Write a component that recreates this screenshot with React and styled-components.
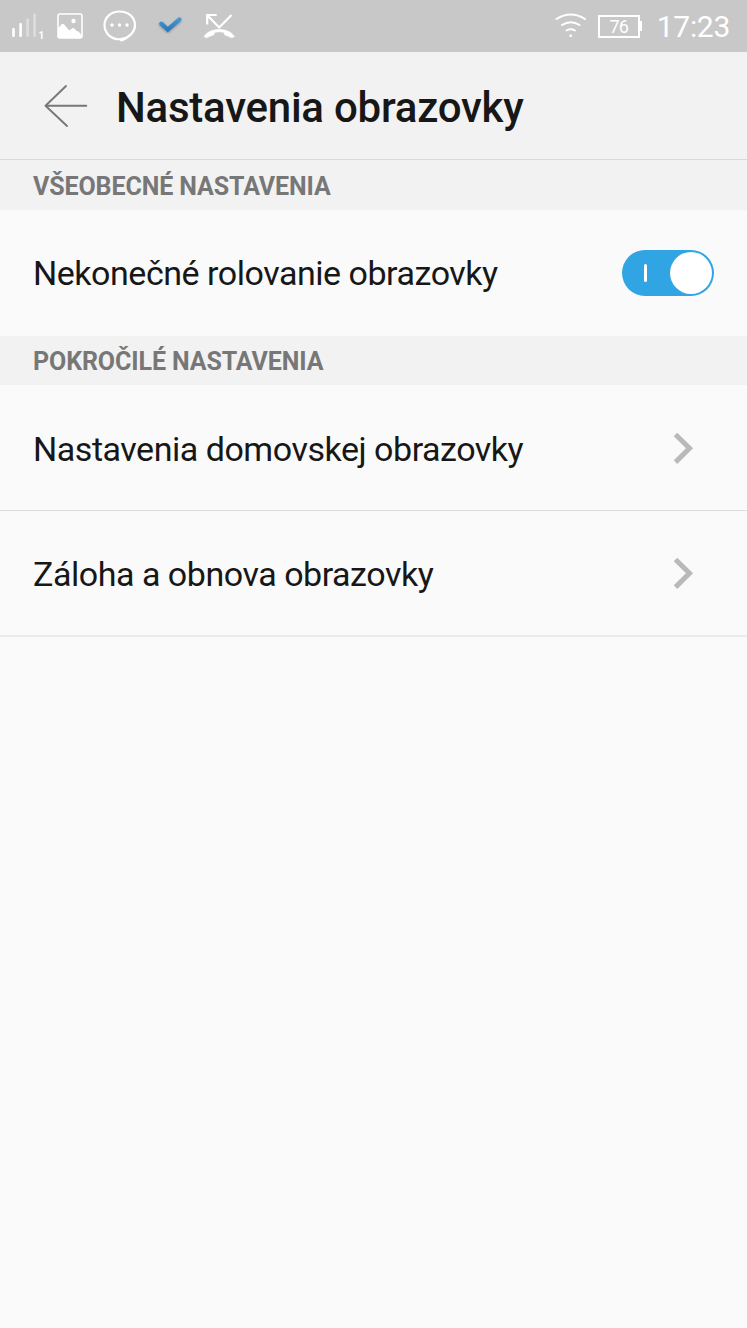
import React from "react";
import styled, { createGlobalStyle } from "styled-components";

const GlobalStyle = createGlobalStyle`
  *, *::before, *::after { box-sizing: border-box; }
  body {
    margin: 0;
    background: #fafafa;
    color: #171717;
    font-family: Roboto, "Noto Sans", sans-serif;
  }
  svg { display: block; flex: none; }
`;

const Screen = styled.main`
  display: flex;
  flex-direction: column;
  width: 100%;
  min-height: 1328px;
  background: #fafafa;
`;

const StatusBar = styled.div`
  display: flex;
  justify-content: space-between;
  height: 52px;
  padding: 0 17px 0 11px;
  background: #c8c8c8;
  color: #fff;
`;

const StatusGroup = styled.div`
  display: flex;
  align-items: center;
  gap: ${({ $gap }) => $gap}px;
`;

const NotificationIcons = styled(StatusGroup)`
  & > :first-child { margin-right: -8px; }
`;

const Clock = styled.time`
  margin-left: 4px;
  padding-top: 2px;
  font-size: 30px;
  line-height: 50px;
  letter-spacing: -0.3px;
`;

const Header = styled.header`
  display: flex;
  align-items: center;
  gap: 28px;
  height: 108px;
  padding-left: 43px;
  background: #f2f2f2;
  border-bottom: 1px solid #d9d9d9;
`;

const BackButton = styled.button`
  padding: 0;
  border: 0;
  background: none;
  color: #777;
`;

const Title = styled.h1`
  margin: 0;
  padding-top: 5px;
  font-size: 42px;
  font-weight: 500;
  line-height: 50px;
  letter-spacing: -0.24px;
  white-space: nowrap;
`;

const SectionTitle = styled.h2`
  height: ${({ $height }) => $height}px;
  margin: 0;
  padding: ${({ $top }) => $top}px 33px 0;
  background: #f2f2f2;
  color: #777;
  font-size: 25px;
  font-weight: 700;
  line-height: 50px;
  letter-spacing: -0.1px;
`;

const Row = styled.div`
  display: flex;
  align-items: center;
  justify-content: space-between;
  height: ${({ $height }) => $height}px;
  padding: 0 ${({ $right }) => $right}px ${({ $bottom = 0 }) => $bottom}px 33px;
  border-bottom: ${({ $line = "0" }) => $line};
`;

const Label = styled.span`
  padding-top: ${({ $top = 1 }) => $top}px;
  font-size: 34px;
  line-height: 42px;
  letter-spacing: -0.47px;
  white-space: nowrap;
`;

const Switch = styled.button`
  display: flex;
  align-items: center;
  justify-content: space-between;
  width: 92px;
  height: 46px;
  padding: 0 2px 0 22px;
  border: 0;
  border-radius: 23px;
  background: #31a5e3;
`;

const SwitchMark = styled.span`
  width: 3px;
  height: 18px;
  border-radius: 1.5px;
  background: #fff;
`;

const SwitchKnob = styled.span`
  width: 42px;
  height: 42px;
  border-radius: 50%;
  background: #fff;
`;

const BatteryWrap = styled.div`
  display: flex;
  align-items: center;
`;

const BatteryBody = styled.span`
  width: 42px;
  height: 23px;
  border: 2px solid #fff;
  font-size: 18px;
  line-height: 20px;
  letter-spacing: -0.8px;
  text-align: center;
`;

const BatteryTip = styled.span`
  width: 2px;
  height: 10px;
  background: #fff;
`;

const SignalIcon = () => (
  <svg width="34" height="52" viewBox="11 0 34 52" fill="#fff">
    <rect x="12.200" y="28" width="2.600" height="9" rx="1" />
    <rect x="19.300" y="23" width="2.600" height="14" rx="1" />
    <rect x="26.300" y="18.500" width="2.600" height="18.500" rx="1" opacity=".4" />
    <rect x="33.300" y="13.500" width="2.600" height="23.500" rx="1" opacity=".4" />
    <text x="38.500" y="39" fontSize="10" fontWeight="700">1</text>
  </svg>
);

const PictureIcon = () => (
  <svg width="26" height="52" viewBox="57 0 26 52">
    <rect x="58" y="14" width="24" height="24" rx="2" fill="none" stroke="#fff" strokeWidth="1.600" />
    <circle cx="73.500" cy="21" r="2.200" fill="#fff" />
    <path d="M58 28.500 61.500 24.300Q62.800 22.900 64.200 24.500L69.200 30.400 72 28.500Q73.200 27.700 74.300 28.500L76.700 31Q79.500 31 82 36.500V38H58Z" fill="#fff" />
  </svg>
);

const ChatIcon = () => (
  <svg width="34" height="52" viewBox="103 0 34 52" fill="#fff">
    <path d="M121 39.200C111.500 40 104.500 33.300 104.500 25.300 104.500 17.300 111 11.500 119.700 11.500S135 17.300 135 25.300C135 30.500 132 35.800 121.600 40.300Z" fill="none" stroke="#fff" strokeWidth="2.200" strokeLinejoin="round" />
    <path d="M120.500 38v3.500q6-1.300 9-5.500Z" />
    <circle cx="112" cy="25" r="1.700" />
    <circle cx="119.500" cy="25" r="1.700" />
    <circle cx="127" cy="25" r="1.700" />
  </svg>
);

const CheckIcon = () => (
  <svg width="26" height="52" viewBox="157 0 26 52">
    <defs>
      <linearGradient id="checkBlue" x1="0" y1="17" x2="0" y2="32" gradientUnits="userSpaceOnUse">
        <stop stopColor="#4a9cda" />
        <stop offset="1" stopColor="#2474b5" />
      </linearGradient>
      <filter id="checkShadow" x="-20%" y="-20%" width="140%" height="160%">
        <feDropShadow dx="0" dy="1.200" stdDeviation=".8" floodColor="#444" floodOpacity=".45" />
      </filter>
    </defs>
    <path d="m161.300 23.700 6.500 5.800 11.500-10" fill="none" stroke="url(#checkBlue)" strokeWidth="4.300" strokeLinecap="round" filter="url(#checkShadow)" />
  </svg>
);

const MissedCallIcon = () => (
  <svg width="32" height="52" viewBox="203 0 32 52">
    <path d="m231.500 15-12.300 12.500L207.500 15.500M207.200 24.500V15h9.500" fill="none" stroke="#fff" strokeWidth="2.200" />
    <path d="M204 36.500C207 32 212.500 29.500 219.200 29.500S231.500 32 234.500 36.500L231.800 37.800 224.600 34.800 223.800 32.300Q219.300 31.300 214.800 32.300L213.800 34.800 206.500 37.800Z" fill="#fff" stroke="#fff" strokeWidth=".6" strokeLinejoin="round" />
  </svg>
);

const WifiIcon = () => (
  <svg width="32" height="52" viewBox="555 0 32 52" fill="none" stroke="#fff" strokeLinecap="round">
    <path d="M556.500 19Q570.800 10.200 585 19" strokeWidth="2" />
    <path d="M562 25Q570.800 19.500 579.500 25" strokeWidth="2" />
    <path d="M566.500 30.500Q570.800 28 575 30.500" strokeWidth="1.800" />
    <circle cx="570.700" cy="35.800" r="1.400" fill="#fff" stroke="none" />
  </svg>
);

const ArrowIcon = () => (
  <svg width="45" height="46" viewBox="43 83 45 46" fill="none" stroke="currentColor" strokeWidth="1.900" strokeLinecap="round" strokeLinejoin="round">
    <path d="M66 86 45.500 105.700 67 126M45.500 105.700H86.300" />
  </svg>
);

const ChevronIcon = () => (
  <svg width="22" height="34" viewBox="672 431 22 34" fill="none" stroke="#b9b9b9" strokeWidth="5">
    <path d="m675.500 434.500 14 13.800-14 13.800" />
  </svg>
);

export default function App() {
  return (
    <>
      <GlobalStyle />
      <Screen>
        <StatusBar>
          <NotificationIcons $gap={20}>
            <SignalIcon />
            <PictureIcon />
            <ChatIcon />
            <CheckIcon />
            <MissedCallIcon />
          </NotificationIcons>
          <StatusGroup $gap={11}>
            <WifiIcon />
            <BatteryWrap>
              <BatteryBody>76</BatteryBody>
              <BatteryTip />
            </BatteryWrap>
            <Clock>17:23</Clock>
          </StatusGroup>
        </StatusBar>
        <Header>
          <BackButton aria-label="Späť">
            <ArrowIcon />
          </BackButton>
          <Title>Nastavenia obrazovky</Title>
        </Header>
        <SectionTitle $height={50} $top={2}>VŠEOBECNÉ NASTAVENIA</SectionTitle>
        <Row $height={126} $right={33} $bottom={1}>
          <Label>Nekonečné rolovanie obrazovky</Label>
          <Switch role="switch" aria-checked="true" aria-label="Nekonečné rolovanie obrazovky">
            <SwitchMark />
            <SwitchKnob />
          </Switch>
        </Row>
        <SectionTitle $height={49} $top={1}>POKROČILÉ NASTAVENIA</SectionTitle>
        <Row $height={126} $right={53} $line="1px solid #dedede">
          <Label $top={3}>Nastavenia domovskej obrazovky</Label>
          <ChevronIcon />
        </Row>
        <Row $height={126} $right={53} $line="2px solid #ebebeb">
          <Label>Záloha a obnova obrazovky</Label>
          <ChevronIcon />
        </Row>
      </Screen>
    </>
  );
}
